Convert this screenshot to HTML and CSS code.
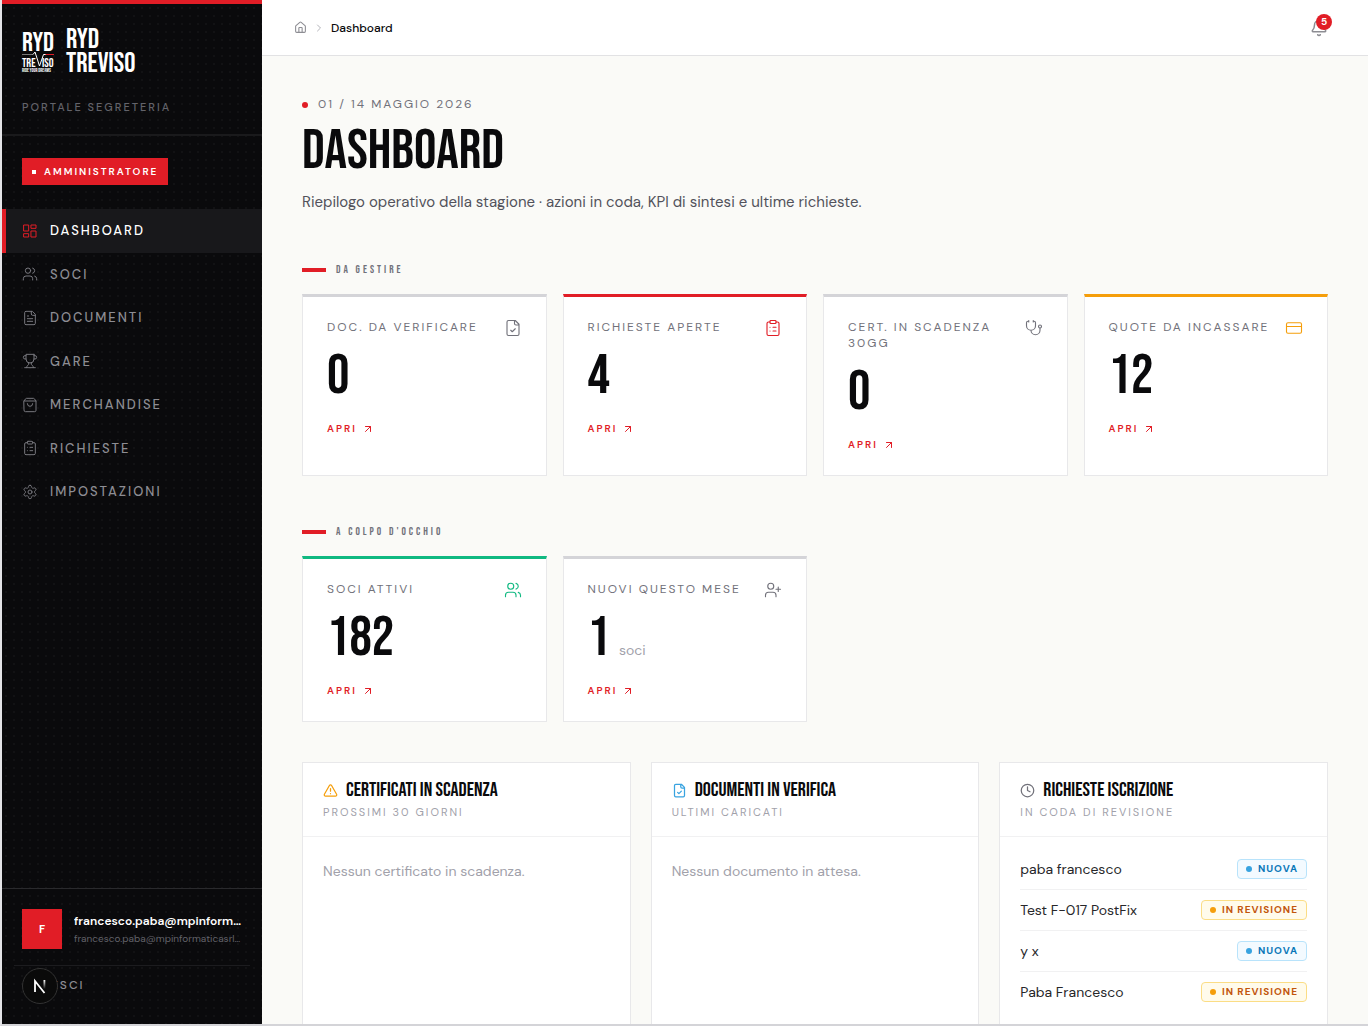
FILE: index.html
```
<!DOCTYPE html>
<html lang="it">
<head>
    <meta charset="UTF-8">
    <meta name="viewport" content="width=device-width, initial-scale=1.0">
    <title>Dashboard - RYD Treviso</title>
    <link rel="stylesheet" href="styles.css">
</head>
<body>
    <!-- icone condivise -->
    <svg class="sprite" aria-hidden="true">
        <symbol id="i-users" viewBox="0 0 24 24"><path d="M16 21v-2a4 4 0 0 0-4-4H6a4 4 0 0 0-4 4v2"/><circle cx="9" cy="7" r="4"/><path d="M22 21v-2a4 4 0 0 0-3-3.87M16 3.13a4 4 0 0 1 0 7.75"/></symbol>
        <symbol id="i-clipboard" viewBox="0 0 24 24"><rect x="8" y="2" width="8" height="4" rx="1"/><path d="M16 4h2a2 2 0 0 1 2 2v14a2 2 0 0 1-2 2H6a2 2 0 0 1-2-2V6a2 2 0 0 1 2-2h2M12 11h4M12 16h4M8 11h.01M8 16h.01"/></symbol>
        <symbol id="i-filecheck" viewBox="0 0 24 24"><path d="M15 2H6a2 2 0 0 0-2 2v16a2 2 0 0 0 2 2h12a2 2 0 0 0 2-2V7ZM14 2v4a2 2 0 0 0 2 2h4M9 15l2 2 4-4"/></symbol>
        <symbol id="i-arrow" viewBox="0 0 24 24"><path d="M7 7h10v10M7 17 17 7"/></symbol>
    </svg>

    <div class="app">
        <aside class="sidebar">
            <div class="brand">
                <a class="brand-link" href="#">
                    <svg class="brand-logo" viewBox="0 0 32 44" role="img" aria-label="Logo RYD Treviso">
                        <text class="logo-big" x="0" y="23">RYD</text>
                        <path class="logo-line" d="M0 26.500h11"/>
                        <path class="logo-red" d="M22.500 26.500h9.500"/>
                        <path class="logo-pulse" d="M11 26.500l2-2.500 4.500 14 4-11.500h2"/>
                        <text class="logo-mid" x="0" y="39">TRE</text>
                        <text class="logo-mid" x="20" y="39">ISO</text>
                        <text class="logo-small" x="0" y="44">RIDE YOUR DREAMS</text>
                    </svg>
                    <span class="brand-name">RYD<br>TREVISO</span>
                </a>
                <p class="brand-sub">Portale segreteria</p>
            </div>

            <div class="role"><span class="role-badge">Amministratore</span></div>

            <nav class="nav">
                <a class="nav-item active" href="#">
                    <svg class="icon" viewBox="0 0 24 24"><rect x="3" y="3" width="7" height="9"/><rect x="14" y="3" width="7" height="5"/><rect x="14" y="12" width="7" height="9"/><rect x="3" y="16" width="7" height="5"/></svg>
                    Dashboard
                </a>
                <a class="nav-item" href="#"><svg class="icon"><use href="#i-users"/></svg>Soci</a>
                <a class="nav-item" href="#">
                    <svg class="icon" viewBox="0 0 24 24"><path d="M15 2H6a2 2 0 0 0-2 2v16a2 2 0 0 0 2 2h12a2 2 0 0 0 2-2V7ZM14 2v4a2 2 0 0 0 2 2h4M10 9H8M16 13H8M16 17H8"/></svg>
                    Documenti
                </a>
                <a class="nav-item" href="#">
                    <svg class="icon" viewBox="0 0 24 24"><path d="M6 9H4.500a2.500 2.500 0 0 1 0-5H6M18 9h1.500a2.500 2.500 0 0 0 0-5H18M4 22h16M10 14.660V17c0 .55-.47.98-.97 1.210C7.850 18.750 7 20.240 7 22M14 14.660V17c0 .55.47.98.97 1.210C16.150 18.750 17 20.240 17 22M18 2H6v7a6 6 0 0 0 12 0V2Z"/></svg>
                    Gare
                </a>
                <a class="nav-item" href="#">
                    <svg class="icon" viewBox="0 0 24 24"><path d="M3 6l2.500-3.400A1.500 1.500 0 0 1 6.700 2h10.600a1.500 1.500 0 0 1 1.200.6L21 6v14a2 2 0 0 1-2 2H5a2 2 0 0 1-2-2ZM3 6h18M16 10a4 4 0 0 1-8 0"/></svg>
                    Merchandise
                </a>
                <a class="nav-item" href="#"><svg class="icon"><use href="#i-clipboard"/></svg>Richieste</a>
                <a class="nav-item" href="#">
                    <svg class="icon" viewBox="0 0 24 24"><path d="M12.220 2h-.44a2 2 0 0 0-2 2v.18a2 2 0 0 1-1 1.730l-.43.25a2 2 0 0 1-2 0l-.15-.08a2 2 0 0 0-2.730.73l-.22.38a2 2 0 0 0 .73 2.730l.15.1a2 2 0 0 1 1 1.720v.51a2 2 0 0 1-1 1.740l-.15.09a2 2 0 0 0-.73 2.730l.22.38a2 2 0 0 0 2.730.73l.15-.08a2 2 0 0 1 2 0l.43.25a2 2 0 0 1 1 1.730V20a2 2 0 0 0 2 2h.44a2 2 0 0 0 2-2v-.18a2 2 0 0 1 1-1.730l.43-.25a2 2 0 0 1 2 0l.15.08a2 2 0 0 0 2.730-.73l.22-.39a2 2 0 0 0-.73-2.730l-.15-.08a2 2 0 0 1-1-1.740v-.5a2 2 0 0 1 1-1.740l.15-.09a2 2 0 0 0 .73-2.730l-.22-.38a2 2 0 0 0-2.730-.73l-.15.08a2 2 0 0 1-2 0l-.43-.25a2 2 0 0 1-1-1.730V4a2 2 0 0 0-2-2z"/><circle cx="12" cy="12" r="3"/></svg>
                    Impostazioni
                </a>
            </nav>

            <div class="account">
                <div class="account-user">
                    <span class="avatar">F</span>
                    <div class="account-text">
                        <div class="account-name">francesco.paba@mpinformaticasrl.it</div>
                        <div class="account-mail">francesco.paba@mpinformaticasrl.it</div>
                    </div>
                </div>
                <button class="logout" type="button">Esci</button>
            </div>
        </aside>

        <div class="main">
            <header class="topbar">
                <nav class="breadcrumb" aria-label="Breadcrumb">
                    <a href="#" aria-label="Home"><svg class="icon icon-home" viewBox="0 0 24 24"><path d="M15 21v-8a1 1 0 0 0-1-1h-4a1 1 0 0 0-1 1v8M3 10a2 2 0 0 1 .71-1.530l7-6a2 2 0 0 1 2.580 0l7 6A2 2 0 0 1 21 10v9a2 2 0 0 1-2 2H5a2 2 0 0 1-2-2z"/></svg></a>
                    <svg class="icon icon-sep" viewBox="0 0 24 24"><path d="m9 18 6-6-6-6"/></svg>
                    <span>Dashboard</span>
                </nav>
                <button class="bell" type="button" aria-label="Notifiche">
                    <svg class="icon icon-bell" viewBox="0 0 24 24"><path d="M10.270 21a2 2 0 0 0 3.460 0M3.260 15.330A1 1 0 0 0 4 17h16a1 1 0 0 0 .74-1.670C19.410 13.960 18 12.500 18 8A6 6 0 0 0 6 8c0 4.500-1.410 5.960-2.740 7.330"/></svg>
                    <span class="bell-count">5</span>
                </button>
            </header>

            <main class="content">
                <p class="eyebrow">01 / 14 maggio 2026</p>
                <h1>Dashboard</h1>
                <p class="lead">Riepilogo operativo della stagione · azioni in coda, KPI di sintesi e ultime richieste.</p>

                <h2 class="section-title">Da gestire</h2>
                <div class="cards">
                    <article class="card">
                        <div class="card-head">
                            <span class="card-label">Doc. da verificare</span>
                            <svg class="icon"><use href="#i-filecheck"/></svg>
                        </div>
                        <div class="card-value">0</div>
                        <a class="card-link" href="#">Apri <svg class="icon"><use href="#i-arrow"/></svg></a>
                    </article>
                    <article class="card card-red">
                        <div class="card-head">
                            <span class="card-label">Richieste aperte</span>
                            <svg class="icon"><use href="#i-clipboard"/></svg>
                        </div>
                        <div class="card-value">4</div>
                        <a class="card-link" href="#">Apri <svg class="icon"><use href="#i-arrow"/></svg></a>
                    </article>
                    <article class="card">
                        <div class="card-head">
                            <span class="card-label">Cert. in scadenza 30gg</span>
                            <svg class="icon" viewBox="0 0 24 24"><path d="M11 2v2M5 2v2M5 3H4a2 2 0 0 0-2 2v4a6 6 0 0 0 12 0V5a2 2 0 0 0-2-2h-1M8 15a6 6 0 0 0 12 0v-3"/><circle cx="20" cy="10" r="2"/></svg>
                        </div>
                        <div class="card-value">0</div>
                        <a class="card-link" href="#">Apri <svg class="icon"><use href="#i-arrow"/></svg></a>
                    </article>
                    <article class="card card-amber">
                        <div class="card-head">
                            <span class="card-label">Quote da incassare</span>
                            <svg class="icon" viewBox="0 0 24 24"><rect x="2" y="5" width="20" height="14" rx="2"/><path d="M2 10h20"/></svg>
                        </div>
                        <div class="card-value">12</div>
                        <a class="card-link" href="#">Apri <svg class="icon"><use href="#i-arrow"/></svg></a>
                    </article>
                </div>

                <h2 class="section-title">A colpo d'occhio</h2>
                <div class="cards">
                    <article class="card card-green">
                        <div class="card-head">
                            <span class="card-label">Soci attivi</span>
                            <svg class="icon"><use href="#i-users"/></svg>
                        </div>
                        <div class="card-value">182</div>
                        <a class="card-link" href="#">Apri <svg class="icon"><use href="#i-arrow"/></svg></a>
                    </article>
                    <article class="card">
                        <div class="card-head">
                            <span class="card-label">Nuovi questo mese</span>
                            <svg class="icon" viewBox="0 0 24 24"><path d="M16 21v-2a4 4 0 0 0-4-4H6a4 4 0 0 0-4 4v2M19 8v6M22 11h-6"/><circle cx="9" cy="7" r="4"/></svg>
                        </div>
                        <div class="card-value">1 <small>soci</small></div>
                        <a class="card-link" href="#">Apri <svg class="icon"><use href="#i-arrow"/></svg></a>
                    </article>
                </div>

                <div class="panels">
                    <section class="panel">
                        <header class="panel-head">
                            <h3><svg class="icon icon-amber" viewBox="0 0 24 24"><path d="m21.730 18-8-14a2 2 0 0 0-3.480 0l-8 14A2 2 0 0 0 4 21h16a2 2 0 0 0 1.730-3M12 9v4M12 17h.01"/></svg>Certificati in scadenza</h3>
                            <p>Prossimi 30 giorni</p>
                        </header>
                        <div class="panel-body"><p class="empty">Nessun certificato in scadenza.</p></div>
                    </section>
                    <section class="panel">
                        <header class="panel-head">
                            <h3><svg class="icon icon-blue"><use href="#i-filecheck"/></svg>Documenti in verifica</h3>
                            <p>Ultimi caricati</p>
                        </header>
                        <div class="panel-body"><p class="empty">Nessun documento in attesa.</p></div>
                    </section>
                    <section class="panel">
                        <header class="panel-head">
                            <h3><svg class="icon icon-gray" viewBox="0 0 24 24"><circle cx="12" cy="12" r="10"/><path d="M12 6v6l4 2"/></svg>Richieste iscrizione</h3>
                            <p>In coda di revisione</p>
                        </header>
                        <ul class="panel-body requests">
                            <li>paba francesco <span class="tag tag-new">Nuova</span></li>
                            <li>Test F-017 PostFix <span class="tag tag-review">In revisione</span></li>
                            <li>y x <span class="tag tag-new">Nuova</span></li>
                            <li>Paba Francesco <span class="tag tag-review">In revisione</span></li>
                        </ul>
                    </section>
                </div>
            </main>
        </div>
    </div>

    <button class="dev-badge" type="button" aria-label="Dev tools">
        <svg viewBox="0 0 20 20">
            <defs><linearGradient id="fade" x1="0" y1="0" x2="0" y2="1"><stop offset="0" stop-color="#fff"/><stop offset="1" stop-color="#fff" stop-opacity="0"/></linearGradient></defs>
            <path d="M5 16V5l9.500 12" fill="none" stroke="#fff" stroke-width="1.800"/>
            <rect x="13.500" y="4" width="1.800" height="9" fill="url(#fade)"/>
        </svg>
    </button>
</body>
</html>
```
FILE: styles.css
```
:root {
    --red: #e11d26;
    --ink: #0a0a0c;
    --line: #e8e8ea;
    --muted: #71717a;
    --display: "Bebas Neue", "Liberation Sans Narrow", "Arial Narrow", sans-serif;
}
* { box-sizing: border-box; }
body {
    margin: 0;
    background: #fafaf7;
    color: var(--ink);
    font-family: "DM Sans", Lato, sans-serif;
    font-size: 14px;
    line-height: 1.5;
}
h1, h2, h3, p, ul { margin: 0; padding: 0; }
h1, h2, h3 { font-weight: 400; }
a { color: inherit; text-decoration: none; }
button { font: inherit; border: none; cursor: pointer; }
.sprite { display: none; }
.icon {
    width: 16px;
    height: 16px;
    flex: none;
    fill: none;
    stroke: currentColor;
    stroke-width: 1.5;
    stroke-linecap: round;
    stroke-linejoin: round;
}
.app {
    display: flex;
    height: 100vh;
    border-left: 2px solid #e4e4e7;
    border-bottom: 2px solid #d4d4d8;
}

/* sidebar */
.sidebar {
    width: 260px;
    flex: none;
    display: flex;
    flex-direction: column;
    border-top: 4px solid var(--red);
    background: radial-gradient(circle, rgba(255, 255, 255, 0.03) 1px, transparent 1px) 0 0 / 8px 8px var(--ink);
    color: #fff;
}
.brand {
    padding: 24px 20px 19px;
    border-bottom: 2px solid #1a1a1c;
}
.brand-link { display: flex; align-items: flex-start; gap: 12px; }
.brand-logo { width: 32px; height: 44px; overflow: visible; fill: #fff; font-family: var(--display); }
.logo-big { font-size: 27px; }
.logo-mid { font-size: 12px; }
.logo-small { font-size: 5px; }
.logo-line, .logo-red, .logo-pulse { fill: none; stroke: #777; }
.logo-red { stroke: var(--red); }
.logo-pulse { stroke: #fff; }
.brand-name {
    font-family: var(--display);
    font-size: 28px;
    line-height: 24px;
}
.brand-sub {
    margin-top: 24px;
    font-size: 11px;
    font-weight: 500;
    letter-spacing: 2px;
    line-height: 15px;
    text-transform: uppercase;
    color: #63636a;
}
.role { padding: 22px 20px 24px; display: flex; }
.role-badge {
    display: flex;
    align-items: center;
    gap: 8px;
    padding: 6px 10px;
    background: var(--red);
    font-size: 10px;
    font-weight: 600;
    letter-spacing: 2px;
    text-transform: uppercase;
}
.role-badge::before { content: ""; width: 4px; height: 4px; background: #fff; }
.nav { flex: 1; }
.nav-item {
    display: flex;
    align-items: center;
    gap: 12px;
    padding: 12px 20px;
    font-size: 13px;
    font-weight: 500;
    letter-spacing: 2px;
    text-transform: uppercase;
    color: #8d8d93;
}
.nav-item .icon { color: #77777d; }
.nav-item.active {
    padding-left: 16px;
    border-left: 4px solid var(--red);
    background: #18181b;
    color: #fff;
}
.nav-item.active .icon { color: var(--red); }
.account { padding: 20px 12px 30px; border-top: 1px solid #2a2a2d; }
.account-user {
    display: flex;
    align-items: center;
    gap: 12px;
    padding: 0 8px 16px;
    border-bottom: 1px solid #1c1c1f;
}
.avatar {
    width: 40px;
    height: 40px;
    flex: none;
    display: grid;
    place-items: center;
    background: var(--red);
    font-size: 11px;
    font-weight: 700;
}
.account-text { min-width: 0; }
.account-name, .account-mail {
    overflow: hidden;
    white-space: nowrap;
    text-overflow: ellipsis;
}
.account-name { font-size: 12px; font-weight: 600; line-height: 20px; }
.account-mail { padding-bottom: 2px; font-size: 10px; line-height: 15px; color: #63636a; }
.logout {
    display: block;
    padding: 10px 37px 0;
    background: none;
    color: #8d8d93;
    font-size: 12px;
    font-weight: 500;
    letter-spacing: 2px;
    text-transform: uppercase;
}
.dev-badge {
    position: fixed;
    left: 22px;
    bottom: 22px;
    width: 36px;
    height: 36px;
    padding: 7px;
    border: 1px solid #333;
    border-radius: 50%;
    background: #0a0a0a;
}
.dev-badge svg { display: block; width: 20px; height: 20px; }

/* main */
.main { flex: 1; min-width: 0; overflow: hidden; }
.topbar {
    display: flex;
    align-items: center;
    justify-content: space-between;
    height: 56px;
    padding: 0 40px 0 32px;
    border-bottom: 1px solid #e2e2e4;
    background: #fff;
}
.breadcrumb { display: flex; align-items: center; gap: 6px; font-size: 12px; font-weight: 500; }
.breadcrumb a { display: flex; color: #8d8d93; }
.icon-home { width: 13px; height: 13px; stroke-width: 2; }
.icon-sep { width: 12px; height: 12px; stroke-width: 2; color: #b4b4ba; }
.bell {
    position: relative;
    display: flex;
    padding: 0;
    background: none;
    color: #8d8d93;
}
.icon-bell { width: 18px; height: 18px; stroke-width: 2; }
.bell-count {
    position: absolute;
    top: -5px;
    right: -4px;
    width: 16px;
    height: 16px;
    border-radius: 50%;
    background: var(--red);
    color: #fff;
    font-size: 10px;
    font-weight: 700;
    line-height: 16px;
    text-align: center;
}
.content { padding: 40px; }
.eyebrow {
    display: flex;
    align-items: center;
    gap: 10px;
    font-size: 12px;
    line-height: 17px;
    letter-spacing: 2px;
    text-transform: uppercase;
    color: var(--muted);
}
.eyebrow::before {
    content: "";
    width: 6px;
    height: 6px;
    border-radius: 50%;
    background: var(--red);
}
h1 {
    margin-top: 11px;
    font-family: var(--display);
    font-size: 56px;
    line-height: 56px;
    text-transform: uppercase;
}
.lead { margin-top: 10px; font-size: 15px; line-height: 24px; color: #52525b; }
.section-title {
    display: flex;
    align-items: center;
    gap: 10px;
    margin-top: 48px;
    font-family: var(--display);
    font-size: 11px;
    line-height: 16px;
    letter-spacing: 3px;
    text-transform: uppercase;
    color: var(--muted);
}
.section-title::before { content: ""; width: 24px; height: 4px; background: var(--red); }
.cards {
    display: grid;
    grid-template-columns: repeat(4, 1fr);
    gap: 16px;
    margin-top: 16px;
}
.card {
    padding: 22px 24px 23px;
    border: 1px solid var(--line);
    border-top: 3px solid #d4d4d8;
    background: #fff;
}
.card-red { border-top-color: var(--red); }
.card-amber { border-top-color: #f59e0b; }
.card-green { border-top-color: #10b981; }
.card-head {
    display: flex;
    justify-content: space-between;
    align-items: flex-start;
    gap: 12px;
    color: var(--muted);
}
.card-head .icon { width: 18px; height: 18px; margin-bottom: -2px; }
.card-red .card-head .icon { color: var(--red); }
.card-amber .card-head .icon { color: #f59e0b; }
.card-green .card-head .icon { color: #10b981; }
.card-label {
    font-size: 12px;
    line-height: 16px;
    letter-spacing: 2px;
    text-transform: uppercase;
}
.card-value {
    margin-top: 14px;
    font-family: var(--display);
    font-size: 56px;
    line-height: 56px;
}
.card-value small {
    font-family: "DM Sans", Lato, sans-serif;
    font-size: 14px;
    line-height: 1;
    color: #a1a1aa;
}
.card-link {
    display: flex;
    align-items: center;
    gap: 5px;
    margin-top: 16px;
    font-size: 10px;
    font-weight: 600;
    letter-spacing: 2px;
    text-transform: uppercase;
    color: var(--red);
}
.card-link .icon { width: 12px; height: 12px; stroke-width: 2; }
.panels {
    display: grid;
    grid-template-columns: repeat(3, 1fr);
    gap: 20px;
    margin-top: 40px;
}
.panel { border: 1px solid var(--line); background: #fff; }
.panel-head { padding: 16px 20px; border-bottom: 1px solid #f1f1f2; }
.panel-head h3 {
    display: flex;
    align-items: center;
    gap: 8px;
    font-family: var(--display);
    font-size: 20px;
    line-height: 22px;
    text-transform: uppercase;
}
.panel-head p {
    margin-top: 3px;
    font-size: 11px;
    line-height: 16px;
    letter-spacing: 2px;
    text-transform: uppercase;
    color: #a1a1aa;
}
.panel-head .icon { width: 15px; height: 15px; stroke-width: 2; }
.icon-amber { color: #f59e0b; }
.icon-blue { color: #38a3e0; }
.icon-gray { color: var(--muted); }
.panel-body { min-height: 200px; padding: 12px 20px; }
.empty { padding: 12px 0; line-height: 20px; color: #a1a1aa; }
.requests { list-style: none; }
.requests li {
    display: flex;
    align-items: center;
    justify-content: space-between;
    padding: 10px 0;
    border-bottom: 1px solid #f1f1f2;
    line-height: 20px;
    color: #27272a;
}
.requests li:last-child { border-bottom: none; }
.tag {
    display: flex;
    align-items: center;
    gap: 6px;
    padding: 0 8px;
    border: 1px solid;
    border-radius: 4px;
    font-size: 10px;
    font-weight: 700;
    line-height: 18px;
    letter-spacing: 1px;
    text-transform: uppercase;
}
.tag::before { content: ""; width: 6px; height: 6px; border-radius: 50%; }
.tag-new { border-color: #b8e3fb; background: #f3faff; color: #0876b8; }
.tag-new::before { background: #38a3e0; }
.tag-review { border-color: #fbdd85; background: #fffbeb; color: #c2560c; }
.tag-review::before { background: #f59e0b; }
```
